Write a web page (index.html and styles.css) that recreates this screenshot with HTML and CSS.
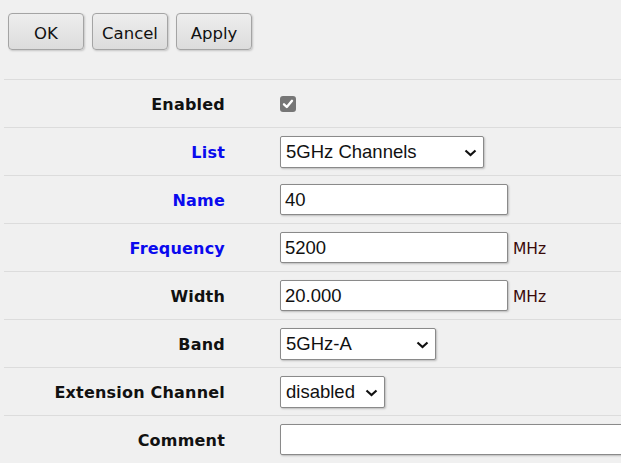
FILE: index.html
```html
<!DOCTYPE html>
<html>
<head>
<meta charset="utf-8">
<link rel="stylesheet" href="styles.css">
</head>
<body>
<div class="toolbar">
  <button class="btn">OK</button>
  <button class="btn">Cancel</button>
  <button class="btn">Apply</button>
</div>
<div class="form">
  <div class="row">
    <div class="label">Enabled</div>
    <div class="ctrl">
      <span class="check"><svg width="16" height="16" viewBox="0 0 16 16"><path d="M4 8.3 L6.8 11 L12 4.8" fill="none" stroke="#fff" stroke-width="2.4" stroke-linecap="round" stroke-linejoin="round"/></svg></span>
    </div>
  </div>
  <div class="row">
    <div class="label link">List</div>
    <div class="ctrl">
      <div class="select w-list"><span>5GHz Channels</span><svg class="chev" width="13" height="8" viewBox="0 0 13 8"><path d="M1.5 1.5 L6.5 6 L11.5 1.5" fill="none" stroke="#111" stroke-width="2.2"/></svg></div>
    </div>
  </div>
  <div class="row">
    <div class="label link">Name</div>
    <div class="ctrl"><div class="input w-std">40</div></div>
  </div>
  <div class="row">
    <div class="label link">Frequency</div>
    <div class="ctrl"><div class="input w-std">5200</div><span class="unit">MHz</span></div>
  </div>
  <div class="row">
    <div class="label">Width</div>
    <div class="ctrl"><div class="input w-std">20.000</div><span class="unit">MHz</span></div>
  </div>
  <div class="row">
    <div class="label">Band</div>
    <div class="ctrl">
      <div class="select w-band"><span>5GHz-A</span><svg class="chev" width="13" height="8" viewBox="0 0 13 8"><path d="M1.5 1.5 L6.5 6 L11.5 1.5" fill="none" stroke="#111" stroke-width="2.2"/></svg></div>
    </div>
  </div>
  <div class="row">
    <div class="label">Extension Channel</div>
    <div class="ctrl">
      <div class="select w-ext"><span>disabled</span><svg class="chev" width="13" height="8" viewBox="0 0 13 8"><path d="M1.5 1.5 L6.5 6 L11.5 1.5" fill="none" stroke="#111" stroke-width="2.2"/></svg></div>
    </div>
  </div>
  <div class="row">
    <div class="label">Comment</div>
    <div class="ctrl"><div class="input w-comment"></div></div>
  </div>
</div>
</body>
</html>
```

FILE: styles.css
```css
html, body {
  margin: 0;
  padding: 0;
  background: #f0f0f0;
  overflow: hidden;
}
body {
  font-family: "DejaVu Sans", Verdana, sans-serif;
  color: #111;
}
.toolbar {
  display: flex;
  align-items: flex-start;
  gap: 8px;
  padding: 13px 0 0 8px;
  height: 79px;
  box-sizing: border-box;
}
.btn {
  width: 76px;
  height: 37px;
  border: 1px solid #a4a4a4;
  border-radius: 4px;
  background: linear-gradient(#eeeeee, #dcdcdc);
  box-shadow: 1px 1px 2px rgba(0,0,0,0.18);
  font-family: "DejaVu Sans", Verdana, sans-serif;
  font-size: 16.5px;
  color: #111;
  padding: 3px 0 0 0;
}
.form {
  margin-left: 4px;
}
.row {
  display: flex;
  align-items: center;
  height: 47px;
  border-top: 1px solid #dcdcdc;
}
.label {
  width: 221px;
  text-align: right;
  font-weight: bold;
  font-size: 16px;
  letter-spacing: 0.2px;
  color: #111;
  flex-shrink: 0;
  padding-top: 2px;
}
.label.link {
  color: #0a0aee;
}
.ctrl {
  margin-left: 55px;
  display: flex;
  align-items: center;
  flex: 1;
  min-width: 0;
}
.check {
  display: block;
  width: 16px;
  height: 16px;
  background: #767676;
  border-radius: 3px;
}
.check svg { display: block; }
.input, .select {
  box-sizing: border-box;
  height: 31px;
  background: #fff;
  border: 1px solid #8a8a8a;
  border-radius: 2px;
  box-shadow: 1px 1px 2px rgba(0,0,0,0.22);
  font-family: "Liberation Sans", Arial, sans-serif;
  font-size: 18.5px;
  color: #111;
  display: flex;
  align-items: center;
  padding-left: 4px;
  padding-top: 1px;
  flex-shrink: 0;
}
.select {
  position: relative;
  padding-left: 5px;
  height: 32px;
}
.chev {
  position: absolute;
  right: 6px;
  top: 12px;
}
.w-list { width: 204px; }
.w-band { width: 156px; }
.w-ext { width: 105px; }
.w-std { width: 228px; }
.w-comment { width: 360px; }
.unit {
  margin-left: 5px;
  font-size: 15.5px;
  color: #3a0a0a;
  padding-top: 2px;
}
```
